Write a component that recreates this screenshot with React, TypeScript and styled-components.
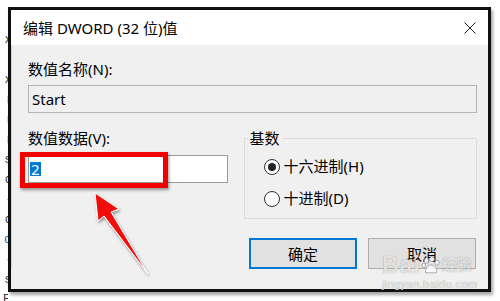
import React from 'react';
import styled, { createGlobalStyle } from 'styled-components';

const GlobalStyle = createGlobalStyle`
  html, body {
    margin: 0;
    padding: 0;
    background: #fff;
  }
  body {
    font-family: "Noto Sans", "Noto Sans CJK SC", sans-serif;
    color: #000;
  }
`;

const Page = styled.div`
  position: relative;
  width: 500px;
  height: 301px;
  overflow: hidden;
  background: #fff;
  display: flex;
  align-items: flex-start;
  padding-top: 7px;
  box-sizing: border-box;
`;

const BackStrip = styled.div`
  width: 8px;
  overflow: hidden;
  display: flex;
  flex-direction: column;
  align-items: flex-end;
  padding-top: 22px;
  font-family: "Liberation Sans", sans-serif;
  font-size: 12px;
  line-height: 20px;
  color: #333;
`;

const BackLine = styled.span<{ $blue?: boolean }>`
  color: ${(p) => (p.$blue ? '#2a5db0' : '#333')};
  margin-right: -3px;
`;

const Window = styled.div`
  width: 483px;
  height: 285px;
  box-sizing: border-box;
  border: 3px solid #111;
  box-shadow: 2px 3px 3px rgba(0, 0, 0, 0.35);
  display: flex;
  flex-direction: column;
  background: #f0f0f0;
`;

const TitleBar = styled.div`
  height: 35px;
  flex: none;
  background: #fff;
  display: flex;
  align-items: center;
  justify-content: space-between;
  padding: 0 12px 0 12px;
  font-size: 15px;
`;

const CloseIcon = styled.svg`
  width: 12px;
  height: 12px;
`;

const Body = styled.div`
  display: flex;
  flex-direction: column;
  padding: 15px 11px 0 16px;
  border-left: 1px solid #d4d4d4;
`;

const Label = styled.div`
  font-size: 15px;
  line-height: 19px;
`;

const TextField = styled.div<{ $readOnly?: boolean; $gap: number }>`
  margin-top: ${(p) => p.$gap}px;
  height: 28px;
  box-sizing: border-box;
  border: 1px solid ${(p) => (p.$readOnly ? '#b4b4b4' : '#9a9a9a')};
  background: ${(p) => (p.$readOnly ? '#f0f0f0' : '#fff')};
  padding-left: ${(p) => (p.$readOnly ? 3 : 1)}px;
  display: flex;
  align-items: center;
  font-size: 15px;
`;

const Selected = styled.span`
  background: #0078d7;
  color: #fff;
  line-height: 14px;
  padding: 0 1px;
`;

const Row = styled.div`
  margin-top: 16px;
  display: flex;
  gap: 16px;
`;

const LeftCol = styled.div`
  width: 200px;
  display: flex;
  flex-direction: column;
`;

const GroupBox = styled.fieldset`
  margin: 0;
  padding: 0;
  width: 234px;
  height: 90px;
  box-sizing: border-box;
  border: 1px solid #dcdcdc;
`;

const Legend = styled.legend`
  margin-left: 3px;
  padding: 0 2px;
  font-size: 15px;
  line-height: 19px;
`;

const RadioList = styled.div`
  display: flex;
  flex-direction: column;
  gap: 13px;
  padding: 9px 0 0 19px;
`;

const RadioRow = styled.div`
  display: flex;
  align-items: center;
  gap: 4px;
  font-size: 15px;
  line-height: 19px;
`;

const RadioCircle = styled.span<{ $checked?: boolean }>`
  width: 16px;
  height: 16px;
  box-sizing: border-box;
  border-radius: 50%;
  border: 1px solid #333;
  background: #fff;
  display: flex;
  align-items: center;
  justify-content: center;
  &::after {
    content: '';
    width: 8px;
    height: 8px;
    border-radius: 50%;
    background: ${(p) => (p.$checked ? '#222' : 'transparent')};
  }
`;

const ButtonRow = styled.div`
  margin-top: 19px;
  display: flex;
  justify-content: flex-end;
  gap: 11px;
  padding-right: 1px;
`;

const Button = styled.div<{ $primary?: boolean }>`
  width: 108px;
  height: 31px;
  box-sizing: border-box;
  background: #e1e1e1;
  border: ${(p) => (p.$primary ? '2px solid #0078d7' : '1px solid #adadad')};
  display: flex;
  align-items: center;
  justify-content: center;
  font-size: 15px;
`;

const RedBox = styled.div`
  position: absolute;
  left: 20px;
  top: 152px;
  width: 148px;
  height: 36px;
  box-sizing: border-box;
  border: 5px solid #f20000;
  box-shadow: 1px 2px 3px rgba(0, 0, 0, 0.4);
`;

const Overlay = styled.svg`
  position: absolute;
  left: 0;
  top: 0;
  width: 500px;
  height: 301px;
  pointer-events: none;
`;

const Watermark = styled.div`
  position: absolute;
  left: 382px;
  top: 252px;
  display: flex;
  flex-direction: column;
  color: rgba(255, 255, 255, 0.75);
  text-shadow: 0 0 1px rgba(110, 110, 110, 0.8);
  pointer-events: none;
`;

const MarkMain = styled.div`
  display: flex;
  align-items: center;
  font-family: "Liberation Sans", "Noto Sans CJK SC", sans-serif;
  font-size: 23px;
  font-weight: bold;
  line-height: 26px;
  letter-spacing: 1px;
`;

const MarkCn = styled.span`
  font-size: 15px;
  margin-left: 1px;
  letter-spacing: 0;
`;

const MarkSub = styled.div`
  font-family: "Liberation Sans", sans-serif;
  font-size: 11px;
  line-height: 12px;
  letter-spacing: 0.4px;
`;

const backLines = [
  { t: 'x' },
  { t: 'I' },
  { t: 'x' },
  { t: 'r' },
  { t: 'r' },
  { t: 'r' },
  { t: 's' },
  { t: 'c' },
  { t: '-', blue: true },
  { t: 'c' },
  { t: 'o', blue: true },
  { t: '-', blue: true },
  { t: 's' },
  { t: 'E' },
];

const App: React.FC = () => {
  return (
    <>
      <GlobalStyle />
      <Page>
        <BackStrip>
          {backLines.map((l, i) => (
            <BackLine key={i} $blue={l.blue}>
              {l.t}
            </BackLine>
          ))}
        </BackStrip>
        <Window>
          <TitleBar>
            <span>编辑 DWORD (32 位)值</span>
            <CloseIcon viewBox="0 0 12 12">
              <path d="M0.5 0.5 L11.5 11.5 M11.5 0.5 L0.5 11.5" stroke="#222" strokeWidth="1" fill="none" />
            </CloseIcon>
          </TitleBar>
          <Body>
            <Label>数值名称(N):</Label>
            <TextField $readOnly $gap={6}>Start</TextField>
            <Row>
              <LeftCol>
                <Label>数值数据(V):</Label>
                <TextField $gap={7}>
                  <Selected>2</Selected>
                </TextField>
              </LeftCol>
              <GroupBox>
                <Legend>基数</Legend>
                <RadioList>
                  <RadioRow>
                    <RadioCircle $checked />
                    <span>十六进制(H)</span>
                  </RadioRow>
                  <RadioRow>
                    <RadioCircle />
                    <span>十进制(D)</span>
                  </RadioRow>
                </RadioList>
              </GroupBox>
            </Row>
            <ButtonRow>
              <Button $primary>确定</Button>
              <Button>取消</Button>
            </ButtonRow>
          </Body>
        </Window>
        <RedBox />
        <Overlay viewBox="0 0 500 301">
          <defs>
            <filter id="arrowShadow" x="-20%" y="-20%" width="140%" height="140%">
              <feDropShadow dx="1" dy="2" stdDeviation="1.5" floodColor="#000" floodOpacity="0.4" />
            </filter>
          </defs>
          <polygon
            points="95,193 119,209 111,212 148,274 104,216 98,221"
            fill="#f21010"
            stroke="#fff"
            strokeWidth="1"
            strokeLinejoin="round"
            filter="url(#arrowShadow)"
          />
        </Overlay>
        <Watermark>
          <MarkMain>
            Bai
            <svg width="20" height="20" viewBox="0 0 18 18">
              <g fill="rgba(255,255,255,0.8)" stroke="rgba(110,110,110,0.8)" strokeWidth="0.6">
                <ellipse cx="5" cy="5" rx="2" ry="2.5" />
                <ellipse cx="10" cy="3.5" rx="2" ry="2.5" />
                <ellipse cx="14.5" cy="7" rx="1.8" ry="2.2" />
                <ellipse cx="2.5" cy="9.5" rx="1.6" ry="2" />
                <path d="M4 16 C4 11 7 9 9 9 C12 9 15 12 14 16 Z" />
              </g>
            </svg>
            <MarkCn>经验</MarkCn>
          </MarkMain>
          <MarkSub>jingyan.baidu.com</MarkSub>
        </Watermark>
      </Page>
    </>
  );
};

export default App;
